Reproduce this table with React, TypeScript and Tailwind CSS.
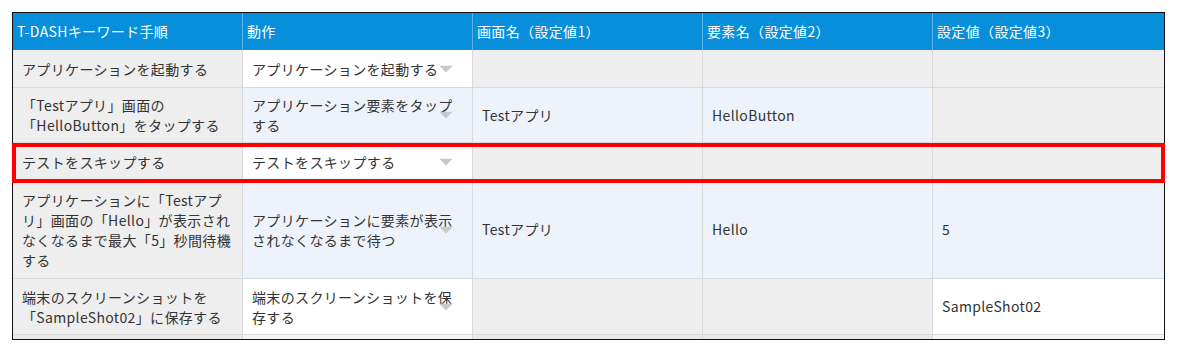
import React from "react";

type Bg = "g" | "w" | "b";

const bgClass: Record<Bg, string> = {
  g: "bg-[#eeeeee]",
  w: "bg-white",
  b: "bg-[#eef3fb]",
};

type Row = {
  h: string;
  c1: string[];
  c2: string[];
  c3: string;
  c4: string;
  c5: string;
  bg: Bg[];
};

const rows: Row[] = [
  {
    h: "h-[38px]",
    c1: ["アプリケーションを起動する"],
    c2: ["アプリケーションを起動する"],
    c3: "",
    c4: "",
    c5: "",
    bg: ["g", "w", "g", "g", "g"],
  },
  {
    h: "h-[55px]",
    c1: ["「Testアプリ」画面の", "「HelloButton」をタップする"],
    c2: ["アプリケーション要素をタップ", "する"],
    c3: "Testアプリ",
    c4: "HelloButton",
    c5: "",
    bg: ["g", "b", "b", "b", "g"],
  },
  {
    h: "h-[38px]",
    c1: ["テストをスキップする"],
    c2: ["テストをスキップする"],
    c3: "",
    c4: "",
    c5: "",
    bg: ["g", "w", "g", "g", "g"],
  },
  {
    h: "h-[98px]",
    c1: [
      "アプリケーションに「Testアプ",
      "リ」画面の「Hello」が表示され",
      "なくなるまで最大「5」秒間待機",
      "する",
    ],
    c2: ["アプリケーションに要素が表示", "されなくなるまで待つ"],
    c3: "Testアプリ",
    c4: "Hello",
    c5: "5",
    bg: ["g", "b", "b", "b", "b"],
  },
  {
    h: "h-[56px]",
    c1: ["端末のスクリーンショットを", "「SampleShot02」に保存する"],
    c2: ["端末のスクリーンショットを保", "存する"],
    c3: "",
    c4: "",
    c5: "SampleShot02",
    bg: ["g", "w", "g", "g", "w"],
  },
];

const headers = [
  "T-DASHキーワード手順",
  "動作",
  "画面名（設定値1）",
  "要素名（設定値2）",
  "設定値（設定値3）",
];

const widths = ["w-[230px]", "w-[230px]", "w-[230px]", "w-[230px]", "w-[231px]"];

function Lines({ lines }: { lines: string[] }) {
  return (
    <div className="flex flex-col leading-[20px] whitespace-nowrap">
      {lines.map((l, i) => (
        <span key={i}>{l}</span>
      ))}
    </div>
  );
}

function Arrow() {
  return (
    <svg
      className="absolute right-[19px] top-1/2 -translate-y-1/2 w-[14px] h-[7px]"
      viewBox="0 0 14 7"
    >
      <polygon points="0,0 14,0 7,7" fill="#c9c9c9" />
    </svg>
  );
}

export default function App() {
  return (
    <div
      className="w-[1180px] h-[363px] bg-white pl-[12px] pt-[12px]"
      style={{ fontFamily: '"Noto Sans CJK JP", "Noto Sans", sans-serif' }}
    >
      <div className="relative w-[1153px] border border-[#111111] text-[14px] tracking-[0.35px] text-[#333333]">
        <div className="flex h-[37px] bg-[#078fdc] text-white">
          {headers.map((h, i) => (
            <div
              key={i}
              className={`${widths[i]} flex items-center pl-[4px] ${
                i < 4 ? "border-r border-[#5eb2ea]" : ""
              }`}
            >
              {h}
            </div>
          ))}
        </div>
        {rows.map((r, ri) => (
          <div key={ri} className={`flex ${r.h}`}>
            {[0, 1, 2, 3, 4].map((ci) => {
              const content =
                ci === 0 ? (
                  <Lines lines={r.c1} />
                ) : ci === 1 ? (
                  <Lines lines={r.c2} />
                ) : (
                  <span>{ci === 2 ? r.c3 : ci === 3 ? r.c4 : r.c5}</span>
                );
              return (
                <div
                  key={ci}
                  className={`${widths[ci]} ${bgClass[r.bg[ci]]} relative flex items-center pl-[9px] border-b border-[#dadada] ${
                    ci < 4 ? "border-r" : ""
                  }`}
                >
                  {content}
                  {ci === 1 && <Arrow />}
                </div>
              );
            })}
          </div>
        ))}
        <div className="flex h-[4px]">
          {[0, 1, 2, 3, 4].map((ci) => (
            <div
              key={ci}
              className={`${widths[ci]} ${
                ci === 1 || ci === 4 ? "bg-[#f4f4f4]" : "bg-[#e9e9e9]"
              } ${ci < 4 ? "border-r border-[#dadada]" : ""}`}
            />
          ))}
        </div>
        <div className="absolute left-[-1px] top-[130px] w-[1153px] h-[40px] border-[4px] border-[#ff0000] pointer-events-none" />
      </div>
    </div>
  );
}
